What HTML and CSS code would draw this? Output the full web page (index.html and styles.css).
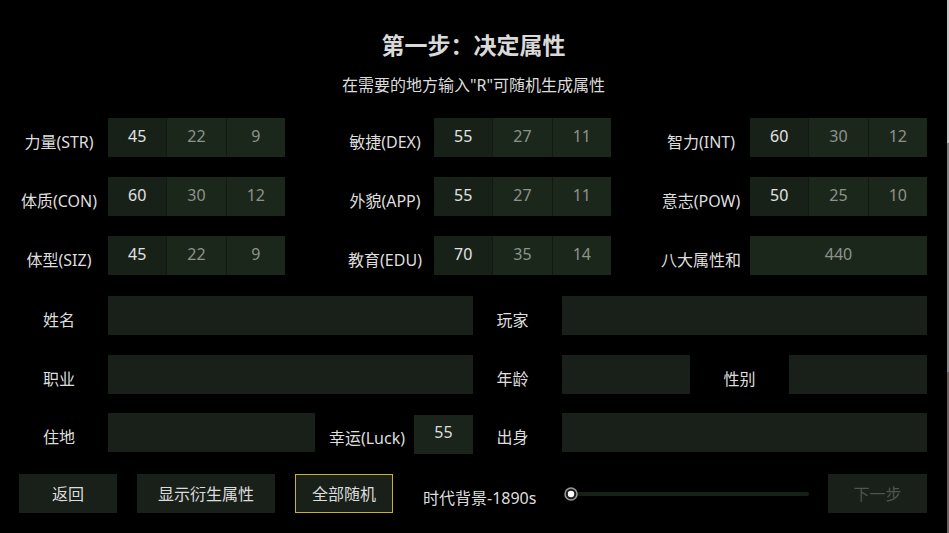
FILE: index.html
```html
<!DOCTYPE html>
<html lang="zh">
<head>
<meta charset="utf-8">
<title>第一步：决定属性</title>
<link rel="stylesheet" href="styles.css">
</head>
<body>
<div class="page">
  <main class="main">
    <header class="head">
      <h1 class="title">第一步：决定属性</h1>
      <p class="sub">在需要的地方输入"R"可随机生成属性</p>
    </header>

    <section class="attrs">
      <div class="lbl">力量(STR)</div>
      <div class="cells"><span class="v main-v">45</span><span class="v">22</span><span class="v">9</span></div>
      <div class="sp"></div>
      <div class="lbl">敏捷(DEX)</div>
      <div class="cells"><span class="v main-v">55</span><span class="v">27</span><span class="v">11</span></div>
      <div class="sp"></div>
      <div class="lbl">智力(INT)</div>
      <div class="cells"><span class="v main-v">60</span><span class="v">30</span><span class="v">12</span></div>

      <div class="lbl">体质(CON)</div>
      <div class="cells"><span class="v main-v">60</span><span class="v">30</span><span class="v">12</span></div>
      <div class="sp"></div>
      <div class="lbl">外貌(APP)</div>
      <div class="cells"><span class="v main-v">55</span><span class="v">27</span><span class="v">11</span></div>
      <div class="sp"></div>
      <div class="lbl">意志(POW)</div>
      <div class="cells"><span class="v main-v">50</span><span class="v">25</span><span class="v">10</span></div>

      <div class="lbl">体型(SIZ)</div>
      <div class="cells"><span class="v main-v">45</span><span class="v">22</span><span class="v">9</span></div>
      <div class="sp"></div>
      <div class="lbl">教育(EDU)</div>
      <div class="cells"><span class="v main-v">70</span><span class="v">35</span><span class="v">14</span></div>
      <div class="sp"></div>
      <div class="lbl">八大属性和</div>
      <div class="sum">440</div>
    </section>

    <section class="info">
      <div class="row">
        <div class="lbl w98">姓名</div>
        <div class="field w365"></div>
        <div class="lbl w89">玩家</div>
        <div class="field w365"></div>
      </div>
      <div class="row">
        <div class="lbl w98">职业</div>
        <div class="field w365"></div>
        <div class="lbl w89">年龄</div>
        <div class="field w128"></div>
        <div class="lbl w99">性别</div>
        <div class="field w138"></div>
      </div>
      <div class="row">
        <div class="lbl w98">住地</div>
        <div class="field w207"></div>
        <div class="lbl w99 luck-l">幸运(Luck)</div>
        <div class="field w59 luck">55</div>
        <div class="lbl w89">出身</div>
        <div class="field w365"></div>
      </div>
    </section>

    <footer class="bar">
      <div class="btn w98">返回</div>
      <div class="btn w138">显示衍生属性</div>
      <div class="btn w98 hot">全部随机</div>
      <div class="era">时代背景-1890s</div>
      <div class="slider">
        <div class="track"></div>
        <svg class="knob" width="16" height="16" viewBox="0 0 16 16">
          <circle cx="8" cy="8" r="6" fill="#1b1f1b" stroke="#9a9a9a" stroke-width="1.5"/>
          <circle cx="8" cy="8" r="3.2" fill="#ffffff"/>
        </svg>
      </div>
      <div class="btn w99 dim">下一步</div>
    </footer>
  </main>
  <div class="edge"></div>
</div>
</body>
</html>
```

FILE: styles.css
```css
html, body {
  margin: 0;
  padding: 0;
  background: #000;
}

body {
  font-family: "Noto Sans", "Noto Sans CJK SC", sans-serif;
  color: #dedede;
  width: 949px;
  height: 533px;
  overflow: hidden;
}

.page {
  display: flex;
  height: 533px;
}

.main {
  width: 947px;
  flex: none;
}

.edge {
  width: 2px;
  flex: none;
  background: linear-gradient(to bottom, #c9c9c9 0, #c9c9c9 143px, #8a8a8a 143px, #8a8a8a 372px, #6e605b 372px, #6e605b 100%);
}

.head {
  padding-top: 30px;
  text-align: center;
}

.title {
  margin: 0;
  font-size: 23px;
  line-height: 30px;
  font-weight: 700;
  color: #d9d9d9;
}

.sub {
  margin: 14px 0 0;
  font-size: 16px;
  line-height: 22px;
  color: #dcdcdc;
}

.attrs {
  margin-top: 22px;
  margin-left: 10px;
  display: grid;
  grid-template-columns: 98px 177px 51px 98px 177px 41px 98px 177px;
  grid-auto-rows: 39px;
  row-gap: 20px;
}

.lbl {
  display: flex;
  align-items: center;
  justify-content: center;
  padding-top: 7px;
  box-sizing: border-box;
  height: 39px;
  font-size: 16px;
  color: #dedede;
  white-space: nowrap;
}

.cells {
  display: grid;
  grid-template-columns: 1fr 1fr 1fr;
  column-gap: 1px;
  background: #121912;
}

.v {
  display: flex;
  align-items: center;
  justify-content: center;
  padding-bottom: 4px;
  background: #1c271c;
  font-size: 16px;
  color: #8c938b;
}

.v.main-v {
  background: #182118;
  color: #e2e2e2;
}

.sum {
  display: flex;
  align-items: center;
  justify-content: center;
  padding-bottom: 4px;
  background: #1c271c;
  font-size: 16px;
  color: #8c938b;
}

.info {
  margin-top: 21px;
  margin-left: 10px;
  display: flex;
  flex-direction: column;
  gap: 19.5px;
}

.row {
  display: flex;
  height: 39px;
}

.field {
  height: 39px;
  background: #182019;
  flex: none;
}

.w59 { width: 59px; }
.w89 { width: 89px; padding-right: 10px; }
.w98 { width: 98px; }
.w99 { width: 99px; }
.w128 { width: 128px; }
.w138 { width: 138px; }
.w207 { width: 207px; }
.w365 { width: 365px; }

.lbl.w89 { width: 89px; }
.lbl.luck-l { padding-left: 5px; padding-top: 9px; }

.luck {
  margin-top: 2px;
  display: flex;
  align-items: center;
  justify-content: center;
  padding-bottom: 5px;
  box-sizing: border-box;
  font-size: 16px;
  color: #dcdcdc;
  background: #1b241b;
}

.bar {
  margin-top: 22px;
  margin-left: 19px;
  display: flex;
  align-items: stretch;
  height: 39px;
}

.btn {
  flex: none;
  display: flex;
  align-items: center;
  justify-content: center;
  background: #182019;
  font-size: 16px;
  color: #dcdcdc;
  box-sizing: border-box;
  padding-bottom: 2px;
  margin-right: 20px;
}

.btn.hot {
  border: 1px solid #c8b42c;
  margin-right: 30px;
}

.btn.dim {
  color: #4d564d;
  margin-right: 0;
}

.era {
  width: 110px;
  flex: none;
  display: flex;
  align-items: center;
  padding-top: 7px;
  box-sizing: border-box;
  font-size: 16px;
  color: #dedede;
  white-space: nowrap;
}

.slider {
  position: relative;
  width: 244px;
  flex: none;
  margin-left: 32px;
  margin-right: 19px;
}

.track {
  margin-top: 18px;
  height: 4px;
  background: #172017;
  border-radius: 2px;
}

.knob {
  position: absolute;
  left: -2px;
  top: 12px;
}
```
